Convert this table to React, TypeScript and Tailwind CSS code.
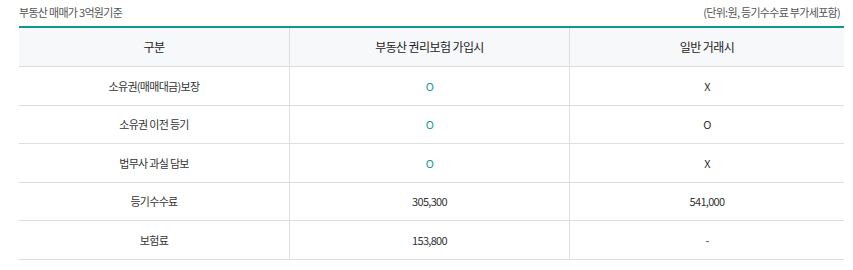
import React from "react";

const rows = [
  { label: "소유권(매매대금)보장", a: "O", b: "X", mark: true },
  { label: "소유권 이전 등기", a: "O", b: "O", mark: true },
  { label: "법무사 과실 담보", a: "O", b: "X", mark: true },
  { label: "등기수수료", a: "305,300", b: "541,000", mark: false },
  { label: "보험료", a: "153,800", b: "-", mark: false },
];

export default function App() {
  return (
    <div className="w-[853px] h-[270px] bg-white pl-[19px] pr-[9px] font-['Noto_Sans_CJK_KR','Noto_Sans',sans-serif]">
      <div className="flex justify-between items-center h-[26px] pb-[2px] text-[11px] text-[#555] tracking-[-0.7px]">
        <span>부동산 매매가 3억원기준</span>
        <span className="pr-[4px]">(단위:원, 등기수수료 부가세포함)</span>
      </div>
      <div className="border-t-2 border-[#0a9a8e]">
        <div className="flex h-[39px] bg-[#f7f8fa] border-b border-[#dedede] text-[12px] text-[#222] tracking-[-0.6px]">
          <div className="w-[271px] flex items-center justify-center border-r border-[#dedede]">구분</div>
          <div className="w-[280px] flex items-center justify-center border-r border-[#dedede]">부동산 권리보험 가입시</div>
          <div className="flex-1 flex items-center justify-center">일반 거래시</div>
        </div>
        {rows.map((r) => (
          <div key={r.label} className="flex h-[38.6px] border-b border-[#dedede] text-[11px] text-[#333] tracking-[-0.7px]">
            <div className="w-[271px] flex items-center justify-center border-r border-[#dedede]">{r.label}</div>
            <div
              className={
                "w-[280px] flex items-center justify-center border-r border-[#dedede] " +
                (r.mark ? "text-[#12999a]" : "")
              }
            >
              {r.a}
            </div>
            <div className="flex-1 flex items-center justify-center">{r.b}</div>
          </div>
        ))}
      </div>
    </div>
  );
}
